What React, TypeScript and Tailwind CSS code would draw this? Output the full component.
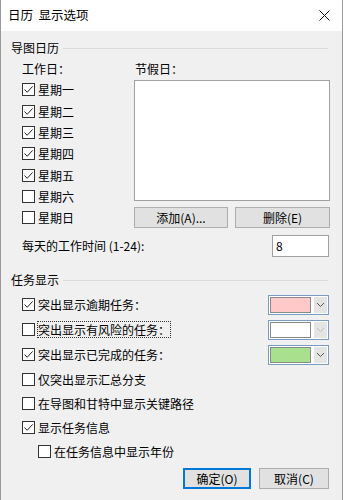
import React from "react"

const font = "font-['Noto_Sans_CJK_SC','Noto_Sans',sans-serif]"

function Check({ checked }: { checked: boolean }) {
  return (
    <span className="flex size-[13px] shrink-0 items-center justify-center border border-[#333] bg-white">
      {checked ? (
        <svg width="11" height="11" viewBox="0 0 11 11" fill="none">
          <path d="M1.5 5.5 L4.2 8.3 L9.6 2.4" stroke="#222" strokeWidth="1" />
        </svg>
      ) : null}
    </span>
  )
}

function CheckRow({
  label,
  checked,
  height,
  focused
}: {
  label: string
  checked: boolean
  height: string
  focused?: boolean
}) {
  return (
    <div className={`flex items-center gap-[2px] ${height}`}>
      <Check checked={checked} />
      <span
        className={
          focused
            ? "px-[1px] leading-[17px] outline outline-1 outline-dotted outline-[#333] -outline-offset-1"
            : "px-[1px] leading-[17px]"
        }
      >
        {label}
      </span>
    </div>
  )
}

function GroupHeader({ label }: { label: string }) {
  return (
    <div className="flex h-[14px] items-center gap-[4px] pr-[2px]">
      <span className="leading-[14px]">{label}</span>
      <span className="h-0 flex-1 border-t border-[#dcdcdc]" />
    </div>
  )
}

function ColorPick({ color, disabled }: { color: string; disabled?: boolean }) {
  return (
    <div className="flex h-[20px] w-[61px] items-center border border-[#7a9cc2] bg-white pl-[1px] pr-[1px]">
      <span
        className="h-[16px] w-[41px] border border-[#8a8a8a]"
        style={{ backgroundColor: color }}
      />
      <span className="ml-[3px] flex h-[16px] flex-1 items-center justify-center bg-[#e4e4e4]">
        <svg width="9" height="6" viewBox="0 0 9 6" fill="none">
          <path
            d="M1 1 L4.5 4.5 L8 1"
            stroke={disabled ? "#bdbdbd" : "#555"}
            strokeWidth="1"
          />
        </svg>
      </span>
    </div>
  )
}

const workDays: [string, boolean, string][] = [
  ["星期一", true, "h-[21px]"],
  ["星期二", true, "h-[22px]"],
  ["星期三", true, "h-[21px]"],
  ["星期四", true, "h-[21px]"],
  ["星期五", true, "h-[22px]"],
  ["星期六", false, "h-[21px]"],
  ["星期日", false, "h-[21px]"]
]

export default function App() {
  return (
    <div className={`h-[500px] w-[344px] bg-white text-[12px] text-black ${font}`}>
      <div className="flex h-[500px] w-[343px] flex-col border-x border-[#9a9a9a]">
        <div className="flex h-[31px] shrink-0 items-center justify-between bg-white pl-[7px] pr-[12px]">
          <span className="text-[12.5px]">日历&nbsp; 显示选项</span>
          <svg width="11" height="11" viewBox="0 0 11 11" fill="none">
            <path d="M0.5 0.5 L10.5 10.5 M10.5 0.5 L0.5 10.5" stroke="#111" strokeWidth="1" />
          </svg>
        </div>

        <div className="flex flex-1 flex-col bg-[#f0f0f0] pl-[10px] pr-[12px] pt-[10px]">
          <GroupHeader label="导图日历" />

          <div className="mt-[3px] flex pl-[11px]">
            <div className="flex w-[112px] flex-col">
              <div className="flex h-[21px] items-center">工作日：</div>
              {workDays.map(([d, c, h]) => (
                <CheckRow key={d} label={d} checked={c} height={h} />
              ))}
            </div>
            <div className="flex w-[196px] flex-col">
              <div className="flex h-[22px] items-center pl-[1px]">节假日：</div>
              <div className="h-[121px] border border-[#a0a0a0] bg-white" />
              <div className="mt-[6px] flex gap-[7px]">
                <button className="h-[21px] w-[94px] border border-[#adadad] bg-[#e1e1e1]">
                  添加(A)...
                </button>
                <button className="h-[21px] w-[95px] border border-[#adadad] bg-[#e1e1e1]">
                  删除(E)
                </button>
              </div>
            </div>
          </div>

          <div className="mt-[7px] flex h-[22px] items-center justify-between pl-[11px] pr-[1px]">
            <span>每天的工作时间 (1-24):</span>
            <div className="flex h-[22px] w-[57px] items-center border border-[#a0a0a0] bg-white pl-[3px]">
              8
            </div>
          </div>

          <div className="mt-[16px]">
            <GroupHeader label="任务显示" />
          </div>

          <div className="mt-[5px] flex flex-col pl-[11px] pr-[1px]">
            <div className="flex h-[25px] items-center justify-between">
              <CheckRow label="突出显示逾期任务：" checked height="h-[25px]" />
              <ColorPick color="#ffc9c9" />
            </div>
            <div className="flex h-[25px] items-center justify-between">
              <CheckRow label="突出显示有风险的任务：" checked={false} height="h-[25px]" focused />
              <ColorPick color="#ffffff" disabled />
            </div>
            <div className="flex h-[25px] items-center justify-between">
              <CheckRow label="突出显示已完成的任务：" checked height="h-[25px]" />
              <ColorPick color="#a9e08e" />
            </div>
            <CheckRow label="仅突出显示汇总分支" checked={false} height="h-[24px]" />
            <CheckRow label="在导图和甘特中显示关键路径" checked={false} height="h-[24px]" />
            <CheckRow label="显示任务信息" checked height="h-[25px]" />
            <div className="pl-[16px]">
              <CheckRow label="在任务信息中显示年份" checked={false} height="h-[23px]" />
            </div>
          </div>

          <div className="mt-[5px] flex justify-end gap-[8px] pr-[1px]">
            <button className="h-[21px] w-[68px] border border-[#0078d7] bg-[#e1e1e1] shadow-[inset_0_0_0_1px_#0078d7]">
              确定(O)
            </button>
            <button className="h-[21px] w-[70px] border border-[#adadad] bg-[#e1e1e1]">
              取消(C)
            </button>
          </div>
        </div>
      </div>
    </div>
  )
}
